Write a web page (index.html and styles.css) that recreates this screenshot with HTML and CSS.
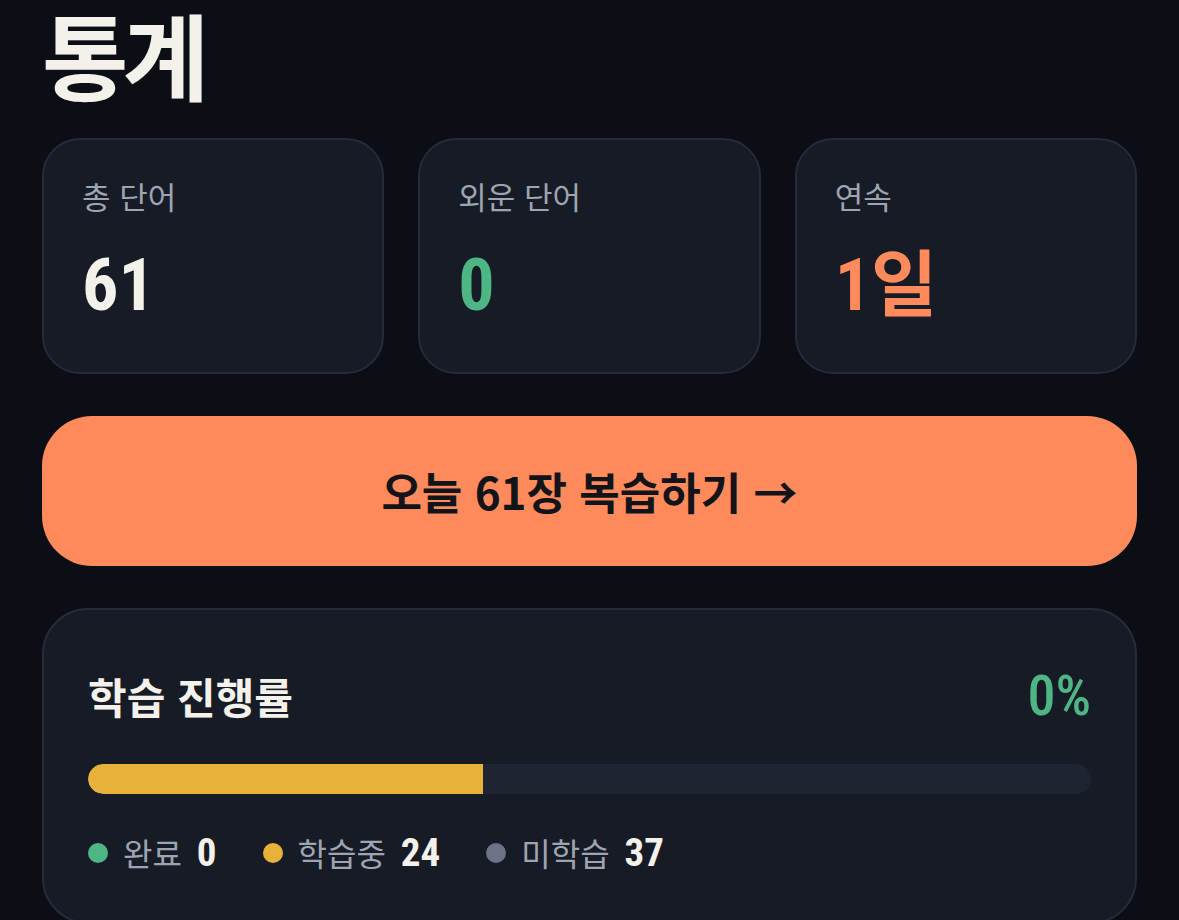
FILE: index.html
```html
<!DOCTYPE html>
<html lang="ko">
<head>
    <meta charset="UTF-8">
    <meta name="viewport" content="width=device-width, initial-scale=1.0">
    <title>통계</title>
    <link rel="stylesheet" href="styles.css">
</head>
<body>
    <main class="page">
        <h1 class="page-title">통계</h1>

        <div class="stat-grid">
            <div class="stat-card">
                <div class="stat-label">총 단어</div>
                <div class="stat-value">61</div>
            </div>
            <div class="stat-card">
                <div class="stat-label">외운 단어</div>
                <div class="stat-value green">0</div>
            </div>
            <div class="stat-card">
                <div class="stat-label">연속</div>
                <div class="stat-value orange">1일</div>
            </div>
        </div>

        <button class="review-btn">오늘 61장 복습하기 →</button>

        <section class="progress-card">
            <div class="progress-head">
                <h2>학습 진행률</h2>
                <span class="progress-pct">0%</span>
            </div>
            <div class="bar">
                <div class="bar-fill" style="width: 39.34%"></div>
            </div>
            <ul class="legend">
                <li><span class="dot done"></span><span>완료 <b>0</b></span></li>
                <li><span class="dot learning"></span><span>학습중 <b>24</b></span></li>
                <li><span class="dot new"></span><span>미학습 <b>37</b></span></li>
            </ul>
        </section>
    </main>
</body>
</html>
```

FILE: styles.css
```css
body {
    margin: 0;
    background-color: #0b0e15;
    color: #f4f1ea;
    font-family: "Noto Sans CJK KR", "Noto Sans", sans-serif;
}

.page {
    padding: 0 42px;
}

.page-title {
    font-size: 94px;
    font-weight: 700;
    line-height: 1;
    letter-spacing: -0.06em;
    margin: 6px 0 38px;
}

.stat-grid {
    display: grid;
    grid-template-columns: repeat(3, 1fr);
    gap: 34px;
}

.stat-card {
    background: #161b25;
    border: 2px solid #252b39;
    border-radius: 38px;
    padding: 34px 38px 44px;
}

.stat-label {
    font-size: 31px;
    line-height: 1.4;
    color: #9ea4b1;
}

/* numbers use a narrow face */
.stat-value,
.progress-pct,
.legend b {
    font-family: Roboto, "Noto Sans CJK KR", sans-serif;
    font-stretch: 75%;
}

.stat-value {
    margin-top: 27px;
    font-size: 72px;
    font-weight: 700;
    line-height: 84px;
}

.stat-value.green {
    color: #4db684;
}

.stat-value.orange {
    color: #ff8a5b;
}

.review-btn {
    display: block;
    width: 100%;
    height: 150px;
    margin-top: 42px;
    background-color: #ff8a5b;
    color: #12141a;
    border: none;
    border-radius: 50px;
    font-family: inherit;
    font-size: 44px;
    font-weight: 700;
    cursor: pointer;
}

.progress-card {
    margin-top: 42px;
    background: #161b25;
    border: 2px solid #252b39;
    border-radius: 46px;
    padding: 58px 44px 46px;
}

.progress-head {
    display: flex;
    justify-content: space-between;
    align-items: center;
}

.progress-head h2 {
    margin: 0;
    font-size: 42px;
    font-weight: 700;
    line-height: 1.2;
}

.progress-pct {
    font-size: 56px;
    font-weight: 500;
    line-height: 1;
    color: #4db684;
}

.bar {
    margin-top: 40px;
    height: 30px;
    border-radius: 15px;
    background: #1f2432;
    overflow: hidden;
}

.bar-fill {
    height: 100%;
    background: #e8b23a;
    border-radius: 15px 0 0 15px;
}

.legend {
    list-style: none;
    margin: 36px 0 0;
    padding: 0;
    display: flex;
    gap: 46px;
    font-size: 32px;
    line-height: 45px;
    color: #9ea4b1;
}

.legend li {
    display: flex;
    align-items: center;
}

.legend b {
    margin-left: 6px;
    font-size: 39px;
    color: #f4f1ea;
}

.dot {
    width: 20px;
    height: 20px;
    border-radius: 50%;
    margin-right: 15px;
}

.dot.done {
    background: #4db684;
}

.dot.learning {
    background: #e8b23a;
}

.dot.new {
    background: #6c7389;
}
```
